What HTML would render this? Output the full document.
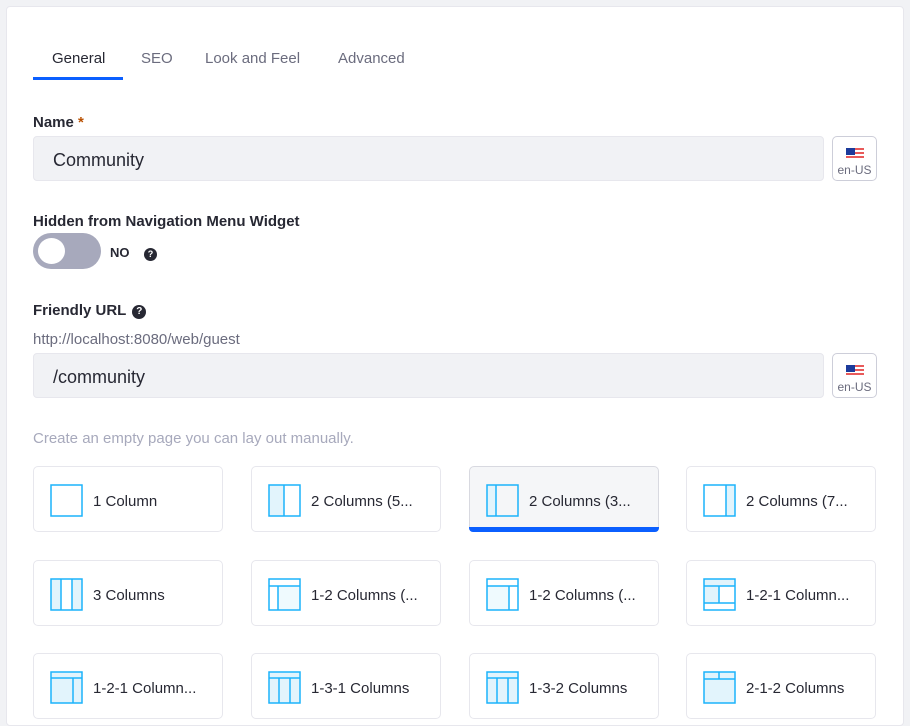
<!DOCTYPE html>
<html><head><style>
*{box-sizing:border-box;margin:0;padding:0}
body{width:910px;height:692px;overflow:hidden;background:#f1f2f5;font-family:"Liberation Sans",sans-serif;color:#272833;position:relative}
.card{position:absolute;left:6px;top:6px;width:898px;height:720px;background:#fff;border:1px solid #e7e7ed;border-radius:4px}
.abs{position:absolute}
.tab{position:absolute;top:50px;font-size:15px;color:#6b6c7e}
.lbl{position:absolute;left:33px;font-size:15px;font-weight:bold;color:#272833}
.inp{position:absolute;left:33px;width:791px;height:45px;background:#f1f2f5;border:1px solid #e7e7ed;border-radius:4px;font-size:18px;padding:13px 0 0 19px;color:#272833}
.flag{position:absolute;left:832px;width:45px;height:45px;border:1px solid #cdced9;border-radius:5px;text-align:center;font-size:12px;color:#6b6c7e;padding-top:11px}
.flag i{display:block;margin:0 auto 3px;width:18px;height:12px;background:repeating-linear-gradient(#e85a5a 0 2px,#fff 2px 4px);position:relative}
.flag i:before{content:"";position:absolute;left:0;top:0;width:9px;height:7px;background:#1c3b9b}
.help{display:inline-block;width:14px;height:14px;border-radius:50%;background:#272833;color:#fff;font-size:10px;font-weight:bold;text-align:center;line-height:14px;vertical-align:1px}
.lc{position:absolute;width:190px;height:66px;border:1px solid #e7e7ed;border-radius:5px;background:#fff}
.lc svg{position:absolute;left:16px;top:17px}
.lc span{position:absolute;left:59px;top:26px;font-size:15px;color:#272833;white-space:nowrap}
.sel{background:#f5f6f8;border-color:#d8d9e0}
.sel:after{content:"";position:absolute;left:-1px;right:-1px;bottom:-1px;height:5px;background:#0b5fff;border-radius:0 0 4px 4px}
</style></head><body>
<div class="card"></div>
<div style="position:absolute;right:0;top:0;width:6px;height:692px;background:#f1f2f5"></div>
<div class="tab" style="left:52px;color:#272833">General</div>
<div class="tab" style="left:141px">SEO</div>
<div class="tab" style="left:205px">Look and Feel</div>
<div class="tab" style="left:338px">Advanced</div>
<div class="abs" style="left:33px;top:77px;width:90px;height:3px;background:#0b5fff"></div>

<div class="lbl" style="top:114px">Name <span style="color:#b95000">*</span></div>
<div class="inp" style="top:136px">Community</div>
<div class="flag" style="top:136px"><i></i>en-US</div>

<div class="lbl" style="top:213px">Hidden from Navigation Menu Widget</div>
<div class="abs" style="left:33px;top:233px;width:68px;height:36px;border-radius:18px;background:#a7a9bc"></div>
<div class="abs" style="left:38px;top:238px;width:27px;height:26px;border-radius:50%;background:#fff"></div>
<div class="abs" style="left:110px;top:245px;font-size:13px;font-weight:bold">NO</div>
<div class="abs" style="left:144px;top:245px"><span class="help" style="width:13px;height:13px;line-height:13px;font-size:9px">?</span></div>

<div class="lbl" style="top:302px">Friendly URL <span class="help" style="margin-left:2px">?</span></div>
<div class="abs" style="left:33px;top:331px;font-size:15px;color:#6b6c7e">http://localhost:8080/web/guest</div>
<div class="inp" style="top:353px">/community</div>
<div class="flag" style="top:353px"><i></i>en-US</div>

<div class="abs" style="left:33px;top:430px;font-size:15px;color:#a7a9bc">Create an empty page you can lay out manually.</div>

<div class="lc" style="left:33px;top:466px"><svg width="33" height="33" viewBox="0 0 33 33" fill="none" stroke="#1cb3fb" stroke-width="1.5"><rect x="1" y="1" width="31" height="31"/></svg><span>1 Column</span></div>
<div class="lc" style="left:251px;top:466px"><svg width="33" height="33" viewBox="0 0 33 33" stroke="#1cb3fb" stroke-width="1.5"><rect x="1" y="1" width="15" height="31" fill="#e2f4fc" stroke="none"/><rect x="1" y="1" width="31" height="31" fill="none"/><path d="M16 1V32"/></svg><span>2 Columns (5...</span></div>
<div class="lc sel" style="left:469px;top:466px"><svg width="33" height="33" viewBox="0 0 33 33" stroke="#1cb3fb" stroke-width="1.5"><rect x="1" y="1" width="9" height="31" fill="#e2f4fc" stroke="none"/><rect x="1" y="1" width="31" height="31" fill="none"/><path d="M10 1V32"/></svg><span>2 Columns (3...</span></div>
<div class="lc" style="left:686px;top:466px"><svg width="33" height="33" viewBox="0 0 33 33" stroke="#1cb3fb" stroke-width="1.5"><rect x="23" y="1" width="9" height="31" fill="#e2f4fc" stroke="none"/><rect x="1" y="1" width="31" height="31" fill="none"/><path d="M23 1V32"/></svg><span>2 Columns (7...</span></div>

<div class="lc" style="left:33px;top:560px"><svg width="33" height="33" viewBox="0 0 33 33" stroke="#1cb3fb" stroke-width="1.5"><rect x="1" y="1" width="10" height="31" fill="#e2f4fc" stroke="none"/><rect x="22" y="1" width="10" height="31" fill="#e2f4fc" stroke="none"/><rect x="1" y="1" width="31" height="31" fill="none"/><path d="M11 1V32M22 1V32"/></svg><span>3 Columns</span></div>
<div class="lc" style="left:251px;top:560px"><svg width="33" height="33" viewBox="0 0 33 33" stroke="#1cb3fb" stroke-width="1.5"><rect x="10" y="8" width="22" height="24" fill="#effafe" stroke="none"/><rect x="1" y="1" width="31" height="31" fill="none"/><path d="M1 8H32M10 8V32"/></svg><span>1-2 Columns (...</span></div>
<div class="lc" style="left:469px;top:560px"><svg width="33" height="33" viewBox="0 0 33 33" stroke="#1cb3fb" stroke-width="1.5"><rect x="1" y="8" width="22" height="24" fill="#effafe" stroke="none"/><rect x="1" y="1" width="31" height="31" fill="none"/><path d="M1 8H32M23 8V32"/></svg><span>1-2 Columns (...</span></div>
<div class="lc" style="left:686px;top:560px"><svg width="33" height="33" viewBox="0 0 33 33" stroke="#1cb3fb" stroke-width="1.5"><rect x="1" y="1" width="31" height="7" fill="#e2f4fc" stroke="none"/><rect x="1" y="8" width="15" height="17" fill="#e2f4fc" stroke="none"/><rect x="1" y="1" width="31" height="31" fill="none"/><path d="M1 8H32M1 25H32M16 8V25"/></svg><span>1-2-1 Column...</span></div>

<div class="lc" style="left:33px;top:653px"><svg width="33" height="33" viewBox="0 0 33 33" stroke="#1cb3fb" stroke-width="1.5"><rect x="1" y="1" width="31" height="31" fill="#e2f4fc" stroke="none"/><rect x="1" y="1" width="31" height="31" fill="none"/><path d="M1 7H32M23 7V32"/></svg><span>1-2-1 Column...</span></div>
<div class="lc" style="left:251px;top:653px"><svg width="33" height="33" viewBox="0 0 33 33" stroke="#1cb3fb" stroke-width="1.5"><rect x="1" y="1" width="31" height="31" fill="#e2f4fc" stroke="none"/><rect x="1" y="1" width="31" height="31" fill="none"/><path d="M1 7H32M11 7V32M22 7V32"/></svg><span>1-3-1 Columns</span></div>
<div class="lc" style="left:469px;top:653px"><svg width="33" height="33" viewBox="0 0 33 33" stroke="#1cb3fb" stroke-width="1.5"><rect x="1" y="1" width="31" height="31" fill="#e2f4fc" stroke="none"/><rect x="1" y="1" width="31" height="31" fill="none"/><path d="M1 7H32M11 7V32M22 7V32"/></svg><span>1-3-2 Columns</span></div>
<div class="lc" style="left:686px;top:653px"><svg width="33" height="33" viewBox="0 0 33 33" stroke="#1cb3fb" stroke-width="1.5"><rect x="1" y="1" width="31" height="31" fill="#e2f4fc" stroke="none"/><rect x="1" y="1" width="31" height="31" fill="none"/><path d="M1 8H32M16 1V8"/></svg><span>2-1-2 Columns</span></div>
</body></html>
